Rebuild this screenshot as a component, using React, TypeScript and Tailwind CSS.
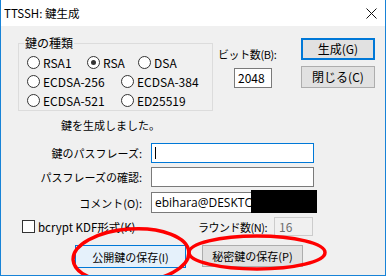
const font = "font-['Noto_Sans_CJK_JP',sans-serif]"

function Radio({ label, checked }: { label: string; checked?: boolean }) {
  return (
    <div className="flex items-center">
      <div className="w-[13px] h-[13px] rounded-full border border-[#333333] bg-white flex items-center justify-center shrink-0">
        {checked && <div className="w-[5px] h-[5px] rounded-full bg-[#333333]" />}
      </div>
      <span className="ml-[3px] text-[12px]">{label}</span>
    </div>
  )
}

function Field({ label, children, className = "" }: { label: string; children?: React.ReactNode; className?: string }) {
  return (
    <div className={"flex items-center " + className}>
      <div className="w-[141px] text-right whitespace-nowrap">{label}</div>
      {children}
    </div>
  )
}

export default function App() {
  return (
    <div className={`${font} relative w-[386px] h-[276px] overflow-hidden bg-[#f0f0f0] border-x border-b border-[#1883d7] text-[11px] leading-[16px] text-black`}>
      {/* title bar */}
      <div className="h-[26px] bg-white flex items-center justify-between pl-[3px] pr-[8px] text-[11.5px]">
        <span>TTSSH: 鍵生成</span>
        <svg width="11" height="11" viewBox="0 0 11 11">
          <path d="M0.5 0.5 L10.5 10.5 M10.5 0.5 L0.5 10.5" stroke="#111" strokeWidth="1" />
        </svg>
      </div>

      {/* top part */}
      <div className="flex items-start">
        <fieldset className="ml-[17px] mt-[10px] w-[195px] border border-[#dcdcdc]">
          <legend className="ml-[5px] px-[1px] leading-[14px] text-[12px]">鍵の種類</legend>
          <div className="pl-[8px] pt-[3px]">
            <div className="flex items-center h-[19px]">
              <div className="w-[60px]"><Radio label="RSA1" /></div>
              <div className="w-[51px]"><Radio label="RSA" checked /></div>
              <Radio label="DSA" />
            </div>
            <div className="flex items-center h-[19px]">
              <div className="w-[94px]"><Radio label="ECDSA-256" /></div>
              <Radio label="ECDSA-384" />
            </div>
            <div className="flex items-center h-[19px]">
              <div className="w-[94px]"><Radio label="ECDSA-521" /></div>
              <Radio label="ED25519" />
            </div>
          </div>
        </fieldset>

        <div className="ml-[5px] mt-[20px] w-[70px]">
          <div className="whitespace-nowrap tracking-[-0.4px]">ビット数(B):</div>
          <div className="ml-[16px] mt-[6px] w-[38px] h-[20px] border border-[#7a7a7a] bg-white flex items-center pl-[3px] text-[12px]">2048</div>
        </div>

        <div className="ml-[13px] mt-[12px] flex flex-col">
          <button className="w-[74px] h-[22px] border-2 border-[#0078d7] bg-[#e1e1e1] flex items-center justify-center text-[12px]">生成(G)</button>
          <button className="mt-[6px] w-[74px] h-[22px] border border-[#adadad] bg-[#e1e1e1] flex items-center justify-center text-[12px]">閉じる(C)</button>
        </div>
      </div>

      <div className="mt-[6px] pl-[60px]">鍵を生成しました。</div>

      <Field label="鍵のパスフレーズ:" className="mt-[10px]">
        <div className="ml-[9px] w-[163px] h-[20px] border border-[#0078d7] bg-white flex items-center">
          <div className="ml-[3px] w-[1px] h-[12px] bg-black" />
        </div>
      </Field>
      <Field label="パスフレーズの確認:" className="mt-[4px]">
        <div className="ml-[9px] w-[163px] h-[20px] border border-[#7a7a7a] bg-white" />
      </Field>
      <Field label="コメント(O):" className="mt-[5px]">
        <div className="ml-[9px] w-[163px] h-[21px] border border-[#7a7a7a] bg-white flex items-center pl-[3px] text-[12px] font-['Open_Sans',sans-serif]">
          ebihara@DESKTOP
        </div>
      </Field>

      <div className="mt-[4px] flex items-center h-[19px]">
        <div className="w-[197px] flex items-center">
          <div className="ml-[21px] w-[13px] h-[13px] border border-[#333333] bg-white" />
          <span className="ml-[3px] whitespace-nowrap text-[11.5px]">bcrypt KDF形式(K)</span>
        </div>
        <div className="w-[76px] whitespace-nowrap tracking-[-0.5px]">ラウンド数(N):</div>
        <div className="w-[39px] h-[19px] border border-[#cccccc] bg-[#f0f0f0] text-[#6d6d6d] flex items-center pl-[4px] text-[12px]">16</div>
      </div>

      <div className="mt-[9px] flex items-start">
        <button className="ml-[74px] w-[111px] h-[23px] border border-[#0078d7] bg-[#e5f1fb] flex items-center justify-center">公開鍵の保存(I)</button>
        <button className="ml-[16px] w-[101px] h-[22px] border border-[#adadad] bg-[#e1e1e1] flex items-center justify-center">秘密鍵の保存(P)</button>
      </div>

      {/* redaction over comment field */}
      <div className="absolute left-[250px] top-[190px] w-[66px] h-[23px] bg-black" />

      {/* red annotation marks */}
      <svg className="absolute left-[-1px] top-0 pointer-events-none" width="386" height="276" viewBox="0 0 386 276">
        <ellipse cx="131" cy="256" rx="58" ry="27" fill="none" stroke="#ff0000" strokeWidth="3.5" transform="rotate(-4 131 256)" />
        <ellipse cx="257" cy="252.5" rx="68" ry="16.5" fill="none" stroke="#ff0000" strokeWidth="3.5" />
      </svg>
    </div>
  )
}
